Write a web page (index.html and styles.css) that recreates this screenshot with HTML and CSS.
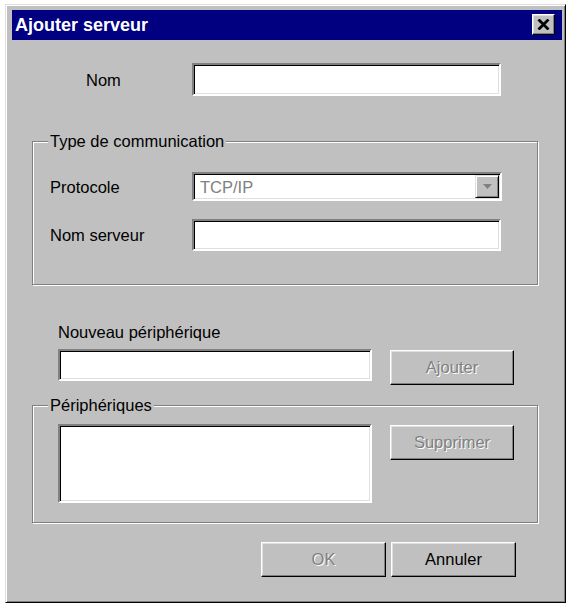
FILE: index.html
```html
<!DOCTYPE html>
<html lang="fr">
<head>
<meta charset="utf-8">
<title>Ajouter serveur</title>
<link rel="stylesheet" href="styles.css">
</head>
<body>
<div class="dialog">
  <div class="titlebar">
    <span class="title">Ajouter serveur</span>
    <button class="close" type="button" aria-label="Fermer">
      <svg width="13" height="11" viewBox="0 0 13 11"><path d="M1.5 0.5 L11.5 10.5 M11.5 0.5 L1.5 10.5" stroke="#000" stroke-width="2.8" fill="none"/></svg>
    </button>
  </div>
  <div class="content">
    <div class="row row-nom">
      <label class="lbl lbl-nom">Nom</label>
      <div class="field f-nom"></div>
    </div>

    <div class="group g1">
      <span class="legend">Type de communication</span>
      <div class="row row-proto">
        <label class="lbl lbl-g">Protocole</label>
        <div class="field combo">
          <span class="combo-val">TCP/IP</span>
          <span class="combo-btn"><svg width="9" height="5" viewBox="0 0 9 5"><path d="M0 0 H9 L4.5 5 Z" fill="#808080"/></svg></span>
        </div>
      </div>
      <div class="row row-srv">
        <label class="lbl lbl-g">Nom serveur</label>
        <div class="field f-srv"></div>
      </div>
    </div>

    <div class="lbl-new">Nouveau périphérique</div>
    <div class="row row-new">
      <div class="field f-new"></div>
      <button class="btn disabled" type="button">Ajouter</button>
    </div>

    <div class="group g2">
      <span class="legend">Périphériques</span>
      <div class="row row-list">
        <div class="field list"></div>
        <button class="btn disabled" type="button">Supprimer</button>
      </div>
    </div>

    <div class="actions">
      <button class="btn disabled" type="button">OK</button>
      <button class="btn" type="button">Annuler</button>
    </div>
  </div>
</div>
</body>
</html>
```
FILE: styles.css
```css
html, body {
  margin: 0;
  padding: 0;
  background: #ffffff;
}

body {
  font-family: "Liberation Sans", Arial, sans-serif;
  font-size: 16.5px;
  color: #000;
}

.dialog {
  box-sizing: border-box;
  margin: 4px 0 0 5px;
  width: 561px;
  height: 599px;
  background: #c0c0c0;
  border: 1px solid;
  border-color: #dfdfdf #000 #000 #dfdfdf;
  box-shadow: inset 1px 1px 0 #fff, inset -1px -1px 0 #808080;
  padding: 5px 3px 0 6px;
}

.titlebar {
  height: 30px;
  background: #000080;
  display: flex;
  align-items: flex-start;
  justify-content: space-between;
  padding: 0 7px 0 3px;
}

.title {
  color: #fff;
  font-weight: bold;
  font-size: 18px;
  line-height: 30px;
}

.close {
  box-sizing: border-box;
  margin-top: 4px;
  width: 23px;
  height: 21px;
  padding: 0;
  background: #c0c0c0;
  border: 1px solid;
  border-color: #fff #000 #000 #fff;
  box-shadow: inset -1px -1px 0 #808080, inset 1px 1px 0 #dfdfdf;
  display: flex;
  align-items: center;
  justify-content: center;
}

.content {
  display: flex;
  flex-direction: column;
  align-items: flex-start;
}

.row {
  display: flex;
  align-items: center;
}

.lbl {
  line-height: 20px;
}

.field {
  box-sizing: border-box;
  background: #fff;
  border: 2px solid;
  border-color: #808080 #fff #fff #808080;
  box-shadow: inset 1px 1px 0 #000, inset -1px -1px 0 #dfdfdf;
}

.row-nom {
  margin-top: 23px;
  padding-left: 74px;
}

.lbl-nom {
  width: 106px;
}

.f-nom {
  width: 309px;
  height: 33px;
}

.group {
  box-sizing: border-box;
  width: 506px;
  margin-left: 20px;
  border: 1px solid #808080;
  box-shadow: inset 1px 1px 0 #fff, 1px 1px 0 #fff;
  display: flex;
  flex-direction: column;
  align-items: flex-start;
}

.legend {
  display: block;
  line-height: 20px;
  margin-top: -11px;
  margin-left: 15px;
  padding: 0 2px;
  background: #c0c0c0;
}

.g1 {
  margin-top: 45px;
  padding-bottom: 33px;
}

.lbl-g {
  width: 142px;
}

.row-proto {
  margin-top: 21px;
  padding-left: 17px;
}

.combo {
  width: 310px;
  height: 29px;
  display: flex;
  align-items: stretch;
  justify-content: space-between;
  padding: 1px 1px 1px 6px;
}

.combo-val {
  color: #808080;
  line-height: 25px;
}

.combo-btn {
  box-sizing: border-box;
  width: 24px;
  background: #c0c0c0;
  border: 1px solid;
  border-color: #dfdfdf #000 #000 #dfdfdf;
  box-shadow: inset 1px 1px 0 #fff, inset -1px -1px 0 #808080;
  display: flex;
  align-items: center;
  justify-content: center;
}

.row-srv {
  margin-top: 18px;
  padding-left: 17px;
}

.f-srv {
  width: 309px;
  height: 32px;
}

.lbl-new {
  margin-top: 37px;
  margin-left: 46px;
  line-height: 20px;
}

.row-new {
  margin-top: 7px;
  margin-left: 46px;
  align-items: flex-start;
}

.f-new {
  width: 314px;
  height: 32px;
}

.btn {
  box-sizing: border-box;
  width: 124px;
  height: 35px;
  padding: 0;
  font-family: "Liberation Sans", Arial, sans-serif;
  font-size: 16.5px;
  color: #000;
  background: #c0c0c0;
  border: 1px solid;
  border-color: #fff #000 #000 #fff;
  box-shadow: inset -1px -1px 0 #808080, inset 1px 1px 0 #dfdfdf;
}

.btn.disabled {
  color: #808080;
  text-shadow: 1px 1px 0 #fff;
}

.row-new .btn,
.row-list .btn {
  margin-left: 18px;
  margin-top: 1px;
}

.g2 {
  margin-top: 20px;
  padding-bottom: 19px;
}

.row-list {
  margin-top: 9px;
  padding-left: 25px;
  align-items: flex-start;
}

.list {
  width: 314px;
  height: 79px;
}

.actions {
  align-self: stretch;
  margin-top: 19px;
  padding-right: 46px;
  display: flex;
  justify-content: flex-end;
  gap: 5px;
}

.actions .btn {
  width: 125px;
}
```
